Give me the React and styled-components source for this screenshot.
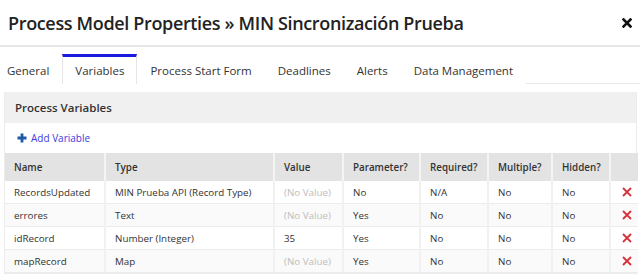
import React from "react"
import styled, { createGlobalStyle } from "styled-components"

const GlobalStyle = createGlobalStyle`
  html, body {
    margin: 0;
    padding: 0;
    background: #fff;
    font-family: "Open Sans", "Liberation Sans", sans-serif;
    color: #333;
  }
`

const Dialog = styled.div`
  width: 640px;
  height: 277px;
  overflow: hidden;
  background: #fff;
`

const TitleBar = styled.div`
  height: 45px;
  display: flex;
  align-items: center;
  justify-content: space-between;
  padding: 0 8px 0 8px;
  border-bottom: 2px solid #e6e6e6;
`

const Title = styled.h2`
  margin: 0;
  font-size: 18px;
  font-weight: 600;
  color: #222;
  letter-spacing: -0.35px;
`

const CloseButton = styled.button`
  border: 0;
  background: none;
  padding: 0;
  width: 10px;
  height: 10px;
  display: flex;
  cursor: pointer;
`

const Tabs = styled.div`
  display: flex;
  margin-top: 7px;
  border-bottom: 1px solid #e8e8e8;
`

const Tab = styled.div`
  height: 27px;
  display: flex;
  align-items: center;
  padding: 0 12px;
  font-size: 11.5px;
  color: #333;
  border-top: 3px solid ${p => (p.active ? "#1b1be0" : "transparent")};
  border-left: 1px solid ${p => (p.active ? "#e6e6e6" : "transparent")};
  border-right: 1px solid ${p => (p.active ? "#e6e6e6" : "transparent")};
  margin-bottom: -1px;
  background: #fff;
  &:first-child {
    padding-left: 6px;
  }
`

const Panel = styled.div`
  margin: 8px 3px 0 4px;
  border: 1px solid #ececec;
  border-top: 0;
`

const PanelHeader = styled.div`
  height: 31px;
  display: flex;
  align-items: center;
  padding-left: 10px;
  background: #f0f0f0;
  font-size: 11.5px;
  font-weight: 600;
  color: #333;
`

const Toolbar = styled.div`
  height: 30px;
  display: flex;
  align-items: center;
  padding-left: 12px;
`

const AddLink = styled.a`
  display: flex;
  align-items: center;
  gap: 4px;
  font-size: 10px;
  color: #3b3bdc;
  text-decoration: none;
  cursor: pointer;
`

const Table = styled.table`
  width: 100%;
  border-collapse: collapse;
  table-layout: fixed;
  font-size: 9.8px;
`

const Th = styled.th`
  height: 28px;
  padding: 0 9px;
  text-align: left;
  font-weight: 600;
  color: #333;
  background: #e3e3e3;
  border-right: 2px solid #f4f4f4;
  &:last-child {
    border-right: 0;
  }
`

const Tr = styled.tr`
  background: ${p => (p.odd ? "#fafafa" : "#fff")};
`

const Td = styled.td`
  height: 22px;
  padding: 0 9px;
  color: ${p => (p.muted ? "#bdbdbd" : "#333")};
  border-right: 2px solid #f1f1f1;
  border-bottom: 1px solid #ececec;
  white-space: nowrap;
  overflow: hidden;
  &:last-child {
    border-right: 0;
    padding: 0 0 0 11px;
  }
`

const CloseIcon = () => (
  <svg width="10" height="10" viewBox="0 0 10 10">
    <path d="M1.5 1.5 L8.5 8.5 M8.5 1.5 L1.5 8.5" stroke="#111" strokeWidth="2.6" strokeLinecap="square" />
  </svg>
)

const PlusIcon = () => (
  <svg width="10" height="10" viewBox="0 0 10 10">
    <path d="M5 0.5 V9.5 M0.5 5 H9.5" stroke="#1f5aa6" strokeWidth="2.8" />
  </svg>
)

const DeleteIcon = () => (
  <svg width="10" height="10" viewBox="0 0 10 10" style={{ display: "block" }}>
    <path d="M1 1 L9 9 M9 1 L1 9" stroke="#d6313b" strokeWidth="1.8" />
  </svg>
)

const tabs = ["General", "Variables", "Process Start Form", "Deadlines", "Alerts", "Data Management"]

const columns = [
  { label: "Name", width: 100 },
  { label: "Type", width: 169 },
  { label: "Value", width: 69 },
  { label: "Parameter?", width: 77 },
  { label: "Required?", width: 68 },
  { label: "Multiple?", width: 64 },
  { label: "Hidden?", width: 58 },
  { label: "", width: 28 }
]

const variables = [
  { name: "RecordsUpdated", type: "MIN Prueba API (Record Type)", value: null, parameter: "No", required: "N/A", multiple: "No", hidden: "No" },
  { name: "errores", type: "Text", value: null, parameter: "Yes", required: "No", multiple: "No", hidden: "No" },
  { name: "idRecord", type: "Number (Integer)", value: "35", parameter: "Yes", required: "No", multiple: "No", hidden: "No" },
  { name: "mapRecord", type: "Map", value: null, parameter: "Yes", required: "No", multiple: "No", hidden: "No" }
]

const App = () => (
  <Dialog>
    <GlobalStyle />
    <TitleBar>
      <Title>Process Model Properties » MIN Sincronización Prueba</Title>
      <CloseButton aria-label="Close">
        <CloseIcon />
      </CloseButton>
    </TitleBar>
    <Tabs>
      {tabs.map(t => (
        <Tab key={t} active={t === "Variables"}>
          {t}
        </Tab>
      ))}
    </Tabs>
    <Panel>
      <PanelHeader>Process Variables</PanelHeader>
      <Toolbar>
        <AddLink>
          <PlusIcon />
          Add Variable
        </AddLink>
      </Toolbar>
      <Table>
        <colgroup>
          {columns.map((c, i) => (
            <col key={i} style={{ width: c.width }} />
          ))}
        </colgroup>
        <thead>
          <tr>
            {columns.map((c, i) => (
              <Th key={i}>{c.label}</Th>
            ))}
          </tr>
        </thead>
        <tbody>
          {variables.map((v, i) => (
            <Tr key={v.name} odd={i % 2 === 1}>
              <Td>{v.name}</Td>
              <Td>{v.type}</Td>
              <Td muted={!v.value}>{v.value || "(No Value)"}</Td>
              <Td>{v.parameter}</Td>
              <Td>{v.required}</Td>
              <Td>{v.multiple}</Td>
              <Td>{v.hidden}</Td>
              <Td>
                <DeleteIcon />
              </Td>
            </Tr>
          ))}
        </tbody>
      </Table>
    </Panel>
  </Dialog>
)

export default App
